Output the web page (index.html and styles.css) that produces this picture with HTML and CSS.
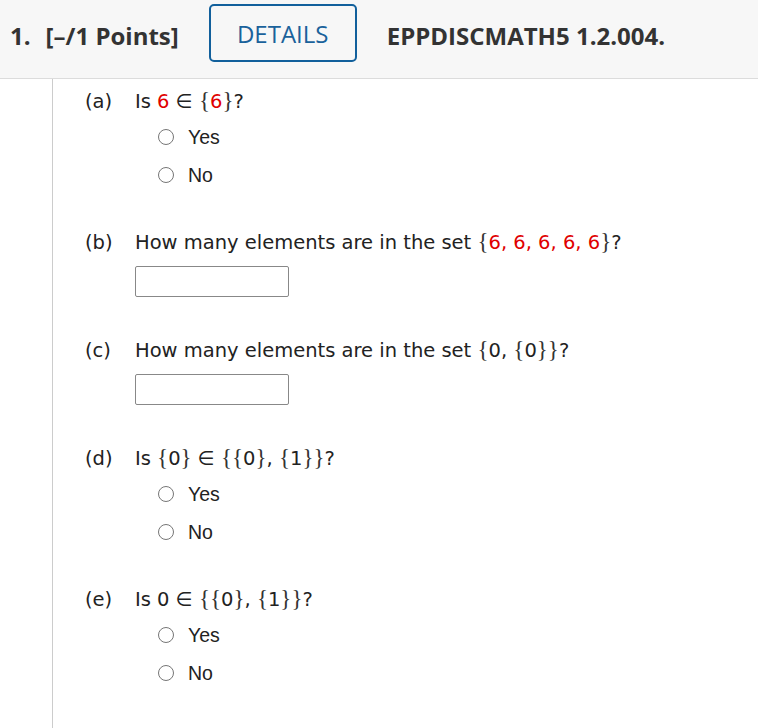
FILE: index.html
```html
<!DOCTYPE html>
<html>
<head>
<meta charset="utf-8">
<link rel="stylesheet" href="styles.css">
</head>
<body>
<div class="header">
  <span class="num">1.</span>
  <span class="points">[–/1 Points]</span>
  <span class="details">DETAILS</span>
  <span class="code">EPPDISCMATH5 1.2.004.</span>
</div>
<div class="content">
  <div class="part">
    <div class="q"><span class="lbl">(a)</span><span class="txt">Is <span class="red">6</span> ∈ <b class="br">{</b><span class="red">6</span><b class="br">}</b>?</span></div>
    <div class="opts">
      <label class="opt"><span class="radio"></span>Yes</label>
      <label class="opt"><span class="radio"></span>No</label>
    </div>
  </div>
  <div class="part">
    <div class="q"><span class="lbl">(b)</span><span class="txt">How many elements are in the set <b class="br">{</b><span class="red">6, 6, 6, 6, 6</span><b class="br">}</b>?</span></div>
    <div class="inp"></div>
  </div>
  <div class="part">
    <div class="q"><span class="lbl">(c)</span><span class="txt">How many elements are in the set <b class="br">{</b>0, <b class="br">{</b>0<b class="br">}}</b>?</span></div>
    <div class="inp"></div>
  </div>
  <div class="part">
    <div class="q"><span class="lbl">(d)</span><span class="txt">Is <b class="br">{</b>0<b class="br">}</b> ∈ <b class="br">{{</b>0<b class="br">}</b>, <b class="br">{</b>1<b class="br">}}</b>?</span></div>
    <div class="opts">
      <label class="opt"><span class="radio"></span>Yes</label>
      <label class="opt"><span class="radio"></span>No</label>
    </div>
  </div>
  <div class="part">
    <div class="q"><span class="lbl">(e)</span><span class="txt">Is 0 ∈ <b class="br">{{</b>0<b class="br">}</b>, <b class="br">{</b>1<b class="br">}}</b>?</span></div>
    <div class="opts">
      <label class="opt"><span class="radio"></span>Yes</label>
      <label class="opt"><span class="radio"></span>No</label>
    </div>
  </div>
</div>
</body>
</html>
```
FILE: styles.css
```css
html, body { margin: 0; padding: 0; background: #fff; }
body { height: 728px; overflow: hidden; display: flex; flex-direction: column; }
.header {
  height: 79px;
  background: #f7f7f7;
  border-bottom: 1px solid #dcdcdc;
  display: flex;
  align-items: center;
  font-family: "Open Sans", sans-serif;
  font-size: 24px;
  font-weight: 700;
  color: #333;
  padding-left: 10px;
  padding-bottom: 8px;
  box-sizing: border-box;
  flex: none;
}
.num { margin-right: 15px; }
.points { margin-right: 30px; }
.details {
  width: 148px;
  height: 58px;
  box-sizing: border-box;
  border: 2px solid #12609c;
  border-radius: 5px;
  color: #1a629b;
  font-weight: 400;
  display: flex;
  align-items: center;
  justify-content: center;
  margin-right: 30px;
  margin-top: -4px;
}
.content {
  flex: 1;
  margin-left: 52px;
  border-left: 1px solid #ccc;
  padding-left: 32px;
  padding-top: 8px;
  font-family: "DejaVu Sans", Verdana, sans-serif;
  font-size: 19.5px;
  color: #222;
}
.part { margin-bottom: 39px; }
.q { display: flex; height: 28px; align-items: center; white-space: nowrap; }
.lbl { width: 50px; flex: none; }
.br { font-family: "Liberation Serif", serif; font-weight: 400; font-size: 23px; color: #333; }
.red { color: #e00000; }
.opts { padding-left: 73px; padding-top: 8px; display: flex; flex-direction: column; gap: 10px; }
.opt { display: flex; align-items: center; font-family: "Liberation Sans", Arial, sans-serif; font-size: 19.5px; height: 28px; color: #222; }
.radio {
  width: 16px; height: 16px;
  border: 1px solid #767676;
  border-radius: 50%;
  margin-right: 14px;
  box-sizing: border-box;
  flex: none;
}
.inp {
  margin-left: 50px;
  margin-top: 10px;
  width: 154px;
  height: 31px;
  border: 1px solid #888;
  border-radius: 2px;
  box-sizing: border-box;
}
```
